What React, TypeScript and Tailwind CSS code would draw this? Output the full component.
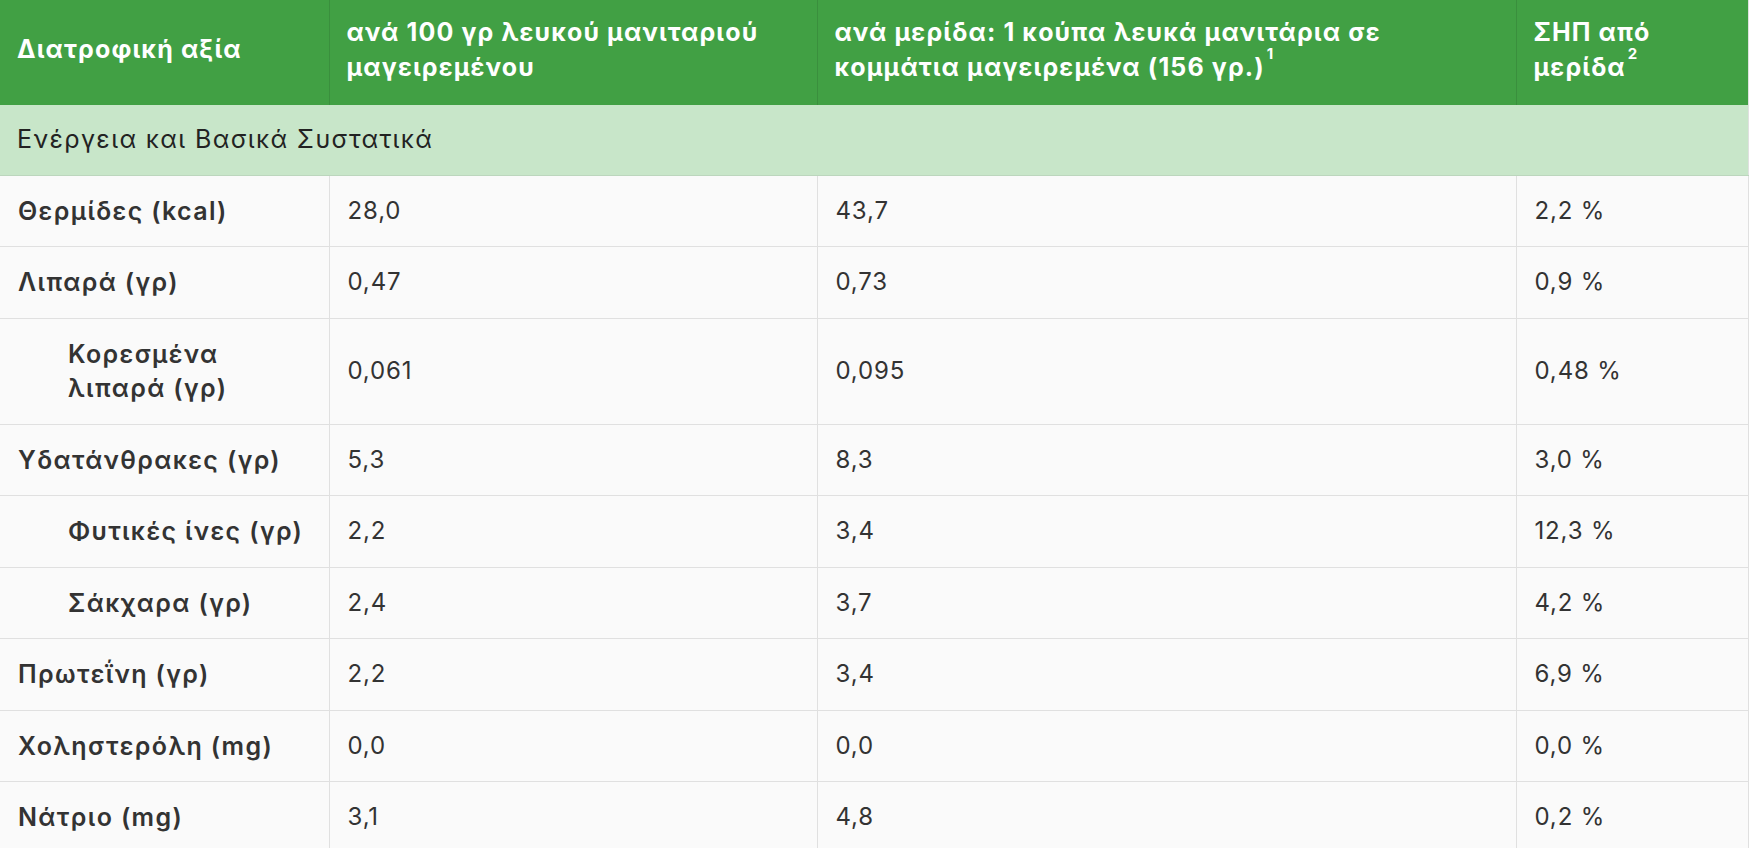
import React from "react";

// ============================================================
// Nutrition table data
// ============================================================

interface Row {
  label: string;
  per100: string;
  perServing: string;
  dv: string;
  indent?: boolean;
}

const rows: Row[] = [
  { label: "Θερμίδες (kcal)", per100: "28,0", perServing: "43,7", dv: "2,2 %" },
  { label: "Λιπαρά (γρ)", per100: "0,47", perServing: "0,73", dv: "0,9 %" },
  { label: "Κορεσμένα λιπαρά (γρ)", per100: "0,061", perServing: "0,095", dv: "0,48 %", indent: true },
  { label: "Υδατάνθρακες (γρ)", per100: "5,3", perServing: "8,3", dv: "3,0 %" },
  { label: "Φυτικές ίνες (γρ)", per100: "2,2", perServing: "3,4", dv: "12,3 %", indent: true },
  { label: "Σάκχαρα (γρ)", per100: "2,4", perServing: "3,7", dv: "4,2 %", indent: true },
  { label: "Πρωτεΐνη (γρ)", per100: "2,2", perServing: "3,4", dv: "6,9 %" },
  { label: "Χοληστερόλη (mg)", per100: "0,0", perServing: "0,0", dv: "0,0 %" },
  { label: "Νάτριο (mg)", per100: "3,1", perServing: "4,8", dv: "0,2 %" },
];

// ============================================================
// Cell styles
// ============================================================

const headCell =
  "px-[17px] pt-[14px] pb-[20px] text-left align-middle font-bold text-white text-[25px] leading-[35px] tracking-[0.045em] border-r border-[#3a8f3d] last:border-r-0";
const bodyCell =
  "px-[18px] py-[18px] align-middle text-[24px] leading-[34.5px] tracking-[0.035em] text-[#333] border-r border-b border-[#e0e0e0]";

function Sup({ children }: { children: React.ReactNode }) {
  return <sup className="text-[15px] leading-none align-super ml-0.5">{children}</sup>;
}

export default function App() {
  return (
    <div className="min-h-screen bg-white" style={{ fontFamily: "Inter, Roboto, 'Noto Sans', sans-serif" }}>
      <table className="table-fixed border-collapse w-[1748px] bg-[#fafafa] border-r border-[#e0e0e0]">
        <colgroup>
          <col className="w-[329px]" />
          <col className="w-[488px]" />
          <col className="w-[699px]" />
          <col className="w-[232px]" />
        </colgroup>
        <thead>
          <tr className="bg-[#41a044] h-[105px]">
            <th className={headCell}>Διατροφική αξία</th>
            <th className={headCell}>
              ανά 100 γρ λευκού μανιταριού
              <br />
              μαγειρεμένου
            </th>
            <th className={headCell}>
              ανά μερίδα: 1 κούπα λευκά μανιτάρια σε
              <br />
              κομμάτια μαγειρεμένα (156 γρ.)
              <Sup>1</Sup>
            </th>
            <th className={headCell}>
              ΣΗΠ από
              <br />
              μερίδα
              <Sup>2</Sup>
            </th>
          </tr>
        </thead>
        <tbody>
          <tr className="bg-[#c8e6c9] h-[70px]">
            <td
              colSpan={4}
              className="px-[17px] text-[25px] leading-[35px] tracking-[0.055em] text-[#222] border-b border-[#bcd6bd]"
            >
              Ενέργεια και Βασικά Συστατικά
            </td>
          </tr>
          {rows.map((r) => (
            <tr key={r.label}>
              <td
                className={`${bodyCell} text-[25px] font-semibold tracking-[0.055em] text-[#222] ${
                  r.indent ? "pl-[68px]" : ""
                }`}
              >
                {r.label}
              </td>
              <td className={bodyCell}>{r.per100}</td>
              <td className={bodyCell}>{r.perServing}</td>
              <td className={bodyCell}>{r.dv}</td>
            </tr>
          ))}
        </tbody>
      </table>
    </div>
  );
}
